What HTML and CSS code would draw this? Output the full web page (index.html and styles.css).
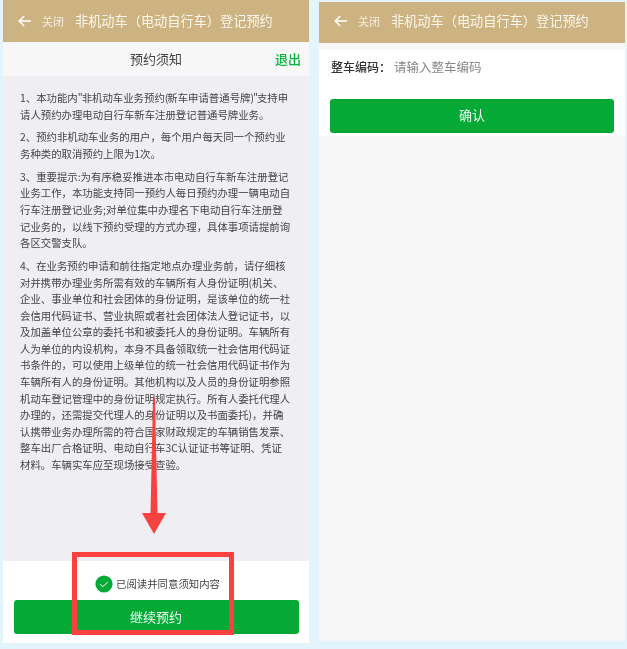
FILE: index.html
```html
<!DOCTYPE html>
<html lang="zh-CN">
<head>
<meta charset="utf-8">
<title>登记预约</title>
<link rel="stylesheet" href="styles.css">
</head>
<body>
<main class="screens">
  <section class="phone phone-left">
    <header class="appbar">
      <svg class="back" viewBox="0 0 14 12" aria-hidden="true"><path d="M13 6H1.6M6.2 1 1.2 6l5 5" fill="none" stroke="#fff" stroke-width="1.5"/></svg>
      <span class="close">关闭</span>
      <span class="title">非机动车（电动自行车）登记预约</span>
    </header>
    <div class="notice-head">
      <h1 class="notice-title">预约须知</h1>
      <span class="exit">退出</span>
    </div>
    <div class="notice-body">
      <p>1、本功能内<span class="punct">"</span>非机动车业务预约<span class="punct">(</span>新车申请普通号牌<span class="punct">)"</span>支持申<br>请人预约办理电动自行车新车注册登记普通号牌业务。</p>
      <p>2、预约非机动车业务的用户，每个用户每天同一个预约业<br>务种类的取消预约上限为1次。</p>
      <p>3、重要提示:为有序稳妥推进本市电动自行车新车注册登记<br>业务工作，本功能支持同一预约人每日预约办理一辆电动自<br>行车注册登记业务;对单位集中办理名下电动自行车注册登<br>记业务的，以线下预约受理的方式办理，具体事项请提前询<br>各区交警支队。</p>
      <p>4、在业务预约申请和前往指定地点办理业务前，请仔细核<br>对并携带办理业务所需有效的车辆所有人身份证明(机关、<br>企业、事业单位和社会团体的身份证明，是该单位的统一社<br>会信用代码证书、营业执照或者社会团体法人登记证书，以<br>及加盖单位公章的委托书和被委托人的身份证明。车辆所有<br>人为单位的内设机构，本身不具备领取统一社会信用代码证<br>书条件的，可以使用上级单位的统一社会信用代码证书作为<br>车辆所有人的身份证明。其他机构以及人员的身份证明参照<br>机动车登记管理中的身份证明规定执行。所有人委托代理人<br>办理的，还需提交代理人的身份证明以及书面委托)，并确<br>认携带业务办理所需的符合国家财政规定的车辆销售发票、<br>整车出厂合格证明、电动自行车3C认证证书等证明、凭证<br>材料。车辆实车应至现场接受查验。</p>
    </div>
    <div class="notice-foot">
      <label class="agree">
        <svg class="tick" viewBox="0 0 18 18" aria-hidden="true"><circle cx="9" cy="9" r="8.6" fill="#04aa35"/><path d="M5.2 9.2 7.9 11.6 12.8 7" fill="none" stroke="#fff" stroke-width="1"/></svg>
        <span>已阅读并同意须知内容</span>
      </label>
      <button class="btn btn-continue" type="button">继续预约</button>
    </div>
    <svg class="arrow" viewBox="0 0 24 137" aria-hidden="true"><path d="M11 0h2l2.500 115H24L12 136 0 115h8.500z" fill="#f9423f"/></svg>
    <div class="highlight"></div>
  </section>
  <section class="phone phone-right">
    <header class="appbar appbar-right">
      <svg class="back" viewBox="0 0 14 12" aria-hidden="true"><path d="M13 6H1.6M6.2 1 1.2 6l5 5" fill="none" stroke="#fff" stroke-width="1.5"/></svg>
      <span class="close">关闭</span>
      <span class="title">非机动车（电动自行车）登记预约</span>
    </header>
    <form class="vin-form">
      <div class="field">
        <span class="field-label">整车编码：</span>
        <span class="placeholder">请输入整车编码</span>
      </div>
      <button class="btn btn-confirm" type="button">确认</button>
    </form>
  </section>
</main>
</body>
</html>
```
FILE: styles.css
```css
* { box-sizing: border-box; }
html, body { margin: 0; padding: 0; }
body {
  width: 627px;
  height: 649px;
  overflow: hidden;
  background: #e4f4fd;
  font-family: "Noto Sans CJK SC", "Noto Sans", sans-serif;
  color: #444;
}
.screens {
  display: flex;
  gap: 10px;
  padding-left: 3px;
  align-items: flex-start;
}
.phone { width: 306px; display: flex; flex-direction: column; }
.phone-left { height: 643px; background: #fff; position: relative; }
.phone-right { height: 639px; margin-top: 2px; background: #f7f7f7; }
.appbar {
  height: 42px;
  flex: none;
  background: #cdb382;
  display: flex;
  align-items: center;
  padding-left: 15px;
  color: #fff;
}
.appbar-right { height: 41px; padding-bottom: 3px; }
.back { width: 14px; height: 12px; flex: none; }
.close, .title, .notice-title, .exit, .notice-body, .agree span, .btn, .field { filter: blur(0.3px); }
.close { margin-left: 10px; width: 33px; font-size: 11px; line-height: 16px; color: #f6efe2; }
.title { font-size: 13.2px; line-height: 18px; white-space: nowrap; color: #fbf7ef; }

.notice-head {
  height: 34px;
  flex: none;
  background: #f7f7f7;
  position: relative;
  display: flex;
  align-items: center;
  justify-content: center;
}
.notice-title { margin: 0 0 1px; font-size: 13px; line-height: 18px; font-weight: 400; color: #444; }
.exit { position: absolute; right: 8px; top: 8px; font-size: 13px; line-height: 18px; font-weight: 500; color: #07b33c; }

.notice-body {
  height: 485px;
  flex: none;
  background: #efeef3;
  padding: 14px 0 0 17px;
  font-size: 10.4px;
  line-height: 16.6px;
  white-space: nowrap;
  color: #444;
}
.notice-body p { margin: 0 0 6.2px; }
.punct { letter-spacing: -1px; }

.notice-foot { flex: 1; display: flex; flex-direction: column; align-items: center; padding-top: 14px; }
.agree { display: flex; align-items: center; gap: 3px; height: 18px; margin-left: 3px; font-size: 10.4px; line-height: 16px; color: #444; }
.tick { width: 18px; height: 18px; flex: none; }
.btn {
  display: block;
  border: 0;
  border-radius: 3px;
  background: #04aa35;
  color: #f2fbf5;
  font-family: inherit;
  padding: 0 0 2px;
  text-align: center;
}
.btn-continue { width: 285px; height: 34px; margin-top: 7px; font-size: 13px; }

.arrow { position: absolute; left: 139px; top: 398px; width: 24px; height: 137px; }
.highlight { position: absolute; left: 69px; top: 552px; width: 162px; height: 83px; border: 5px solid #f9423f; }

.vin-form { margin-top: 7px; height: 86px; background: #fff; padding: 0 11px; }
.field { height: 49px; padding: 8px 0 0 1px; display: flex; align-items: flex-start; line-height: 18px; white-space: nowrap; }
.field-label { font-size: 12px; font-weight: 500; color: #333; width: 63px; }
.placeholder { font-size: 12.5px; color: #888; }
.btn-confirm { width: 284px; height: 34px; padding-bottom: 4px; font-size: 13px; }
```
